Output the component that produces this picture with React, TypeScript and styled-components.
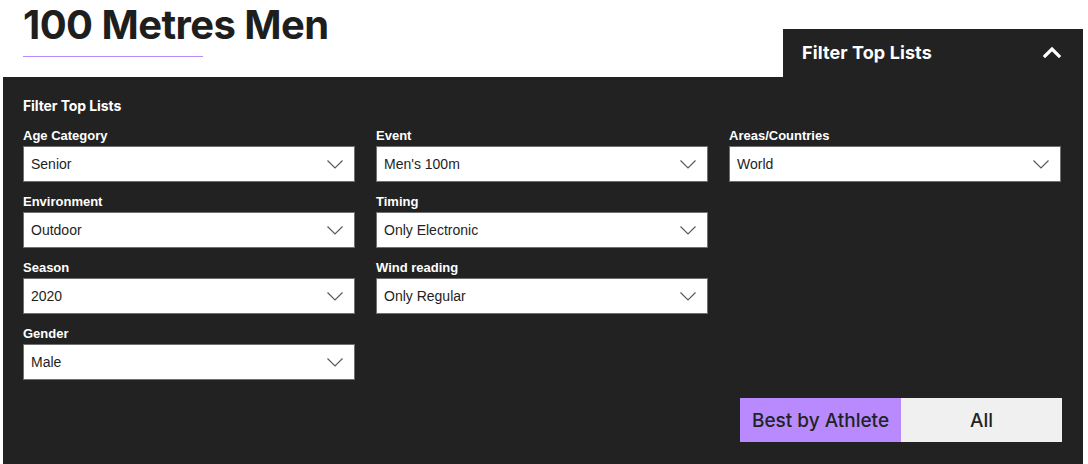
import React from "react";
import styled, { createGlobalStyle } from "styled-components";

const Global = createGlobalStyle`
  html, body { margin: 0; padding: 0; background: #ffffff; }
  body { font-family: "Liberation Sans", Arial, sans-serif; }
  * { box-sizing: border-box; }
`;

const Page = styled.div`
  width: 1088px;
  height: 464px;
  overflow: hidden;
  padding: 0 5px 0 3px;
`;

const TopRow = styled.div`
  display: flex;
  align-items: flex-end;
  justify-content: space-between;
  height: 77px;
`;

const TitleBlock = styled.div`
  padding-left: 20px;
  align-self: flex-start;
`;

const Title = styled.h1`
  margin: 0;
  padding-top: 3px;
  font-family: Inter, "Noto Sans", sans-serif;
  font-weight: 700;
  font-size: 40px;
  line-height: 44px;
  letter-spacing: -0.55px;
  color: #1e1e1e;
`;

const Underline = styled.div`
  width: 180px;
  height: 1px;
  margin-top: 9px;
  background: #b88afc;
`;

const Tab = styled.div`
  width: 300px;
  height: 48px;
  background: #222222;
  display: flex;
  align-items: center;
  justify-content: space-between;
  padding: 0 22px 2px 19px;
  color: #ffffff;
  font-family: Inter, "Noto Sans", sans-serif;
  font-weight: 700;
  font-size: 18px;
  letter-spacing: 0.1px;
`;

const Panel = styled.div`
  background: #222222;
  height: 387px;
  padding: 20px 21px 22px 20px;
  display: flex;
  flex-direction: column;
`;

const PanelTitle = styled.div`
  font-family: Inter, "Noto Sans", sans-serif;
  font-weight: 700;
  font-size: 14px;
  letter-spacing: -0.1px;
  color: #ffffff;
  line-height: 17px;
  margin-bottom: 14px;
`;

const Grid = styled.div`
  display: grid;
  grid-template-columns: repeat(3, 332px);
  column-gap: 21px;
`;

const Column = styled.div`
  display: flex;
  flex-direction: column;
  gap: 12px;
`;

const Field = styled.div`
  display: flex;
  flex-direction: column;
`;

const Label = styled.label`
  font-family: "Liberation Sans", Arial, sans-serif;
  font-weight: 700;
  font-size: 13px;
  line-height: 16px;
  color: #ffffff;
  margin-bottom: 2px;
`;

const SelectBox = styled.div`
  height: 36px;
  background: #ffffff;
  border: 1px solid #6f6f6f;
  display: flex;
  align-items: center;
  justify-content: space-between;
  padding: 0 11px 0 7px;
  font-family: "Liberation Sans", Arial, sans-serif;
  font-size: 14px;
  color: #1e1e1e;
`;

const Footer = styled.div`
  margin-top: auto;
  display: flex;
  justify-content: flex-end;
`;

const Toggle = styled.button<{ $active?: boolean }>`
  width: 161px;
  height: 44px;
  border: none;
  margin: 0;
  padding: 0;
  background: ${(p) => (p.$active ? "#b98afd" : "#f0f0f0")};
  color: #1f2424;
  font-family: Inter, "Noto Sans", sans-serif;
  font-weight: 500;
  font-size: 19px;
  letter-spacing: 0px;
  cursor: pointer;
`;

const Chevron = () => (
  <svg width="16" height="9" viewBox="0 0 16 9" fill="none">
    <path d="M0.5 0.5 L8 8 L15.5 0.5" stroke="#5a5a5a" strokeWidth="1.2" />
  </svg>
);

const ChevronUp = () => (
  <svg width="18" height="12" viewBox="0 0 18 12" fill="none">
    <path d="M2 10 L9 3 L16 10" stroke="#ffffff" strokeWidth="3.2" strokeLinecap="square" />
  </svg>
);

type F = { label: string; value: string };

const columns: F[][] = [
  [
    { label: "Age Category", value: "Senior" },
    { label: "Environment", value: "Outdoor" },
    { label: "Season", value: "2020" },
    { label: "Gender", value: "Male" },
  ],
  [
    { label: "Event", value: "Men's 100m" },
    { label: "Timing", value: "Only Electronic" },
    { label: "Wind reading", value: "Only Regular" },
  ],
  [{ label: "Areas/Countries", value: "World" }],
];

export default function App() {
  return (
    <Page>
      <Global />
      <TopRow>
        <TitleBlock>
          <Title>100 Metres Men</Title>
          <Underline />
        </TitleBlock>
        <Tab>
          <span>Filter Top Lists</span>
          <ChevronUp />
        </Tab>
      </TopRow>
      <Panel>
        <PanelTitle>Filter Top Lists</PanelTitle>
        <Grid>
          {columns.map((col, i) => (
            <Column key={i}>
              {col.map((f) => (
                <Field key={f.label}>
                  <Label>{f.label}</Label>
                  <SelectBox>
                    <span>{f.value}</span>
                    <Chevron />
                  </SelectBox>
                </Field>
              ))}
            </Column>
          ))}
        </Grid>
        <Footer>
          <Toggle $active>Best by Athlete</Toggle>
          <Toggle>All</Toggle>
        </Footer>
      </Panel>
    </Page>
  );
}
